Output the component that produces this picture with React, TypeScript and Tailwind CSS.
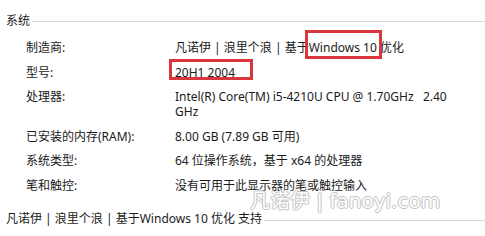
import React from "react";

const font = {
  fontFamily: '"Noto Sans", "Noto Sans CJK SC", sans-serif',
};

function Row({ label, children }: { label: string; children: React.ReactNode }) {
  return (
    <div className="flex">
      <div className="w-[149px] shrink-0">{label}</div>
      <div className="flex-1">{children}</div>
    </div>
  );
}

export default function App() {
  return (
    <div
      className="relative w-[485px] h-[236px] overflow-hidden bg-white text-[12px] leading-[15px] text-[#1a1a1a] font-['Noto_Sans','Noto_Sans_CJK_SC',sans-serif]"
      style={font}
    >
      <div className="flex items-center pl-[6px] pt-[13px]">
        <span>系统</span>
        <div className="ml-[2px] mt-[2px] h-px flex-1 bg-[#d6d6d6]" />
      </div>

      <div className="mt-[12px] flex flex-col gap-[9.5px] pl-[26px]">
        <Row label="制造商:">凡诺伊 | 浪里个浪 | 基于Windows 10 优化</Row>
        <Row label="型号:">20H1 2004</Row>
        <Row label="处理器:">
          <span className="whitespace-pre">Intel(R) Core(TM) i5-4210U CPU @ 1.70GHz   2.40</span>
          <br />
          GHz
        </Row>
        <Row label="已安装的内存(RAM):">8.00 GB (7.89 GB 可用)</Row>
        <Row label="系统类型:">64 位操作系统，基于 x64 的处理器</Row>
        <Row label="笔和触控:">没有可用于此显示器的笔或触控输入</Row>
      </div>

      <div className="mt-[18px] flex items-center pl-[6px]">
        <span>凡诺伊 | 浪里个浪 | 基于Windows 10 优化 支持</span>
        <div className="ml-[2px] mt-[5px] h-px flex-1 bg-[#d6d6d6]" />
      </div>

      <div className="pointer-events-none absolute left-[305px] top-[30px] h-[29px] w-[77px] border-[3px] border-[#d9363e]" />
      <div className="pointer-events-none absolute left-[169px] top-[59px] h-[21px] w-[84px] border-[3px] border-[#d9363e]" />

      <div className="pointer-events-none absolute left-[250px] top-[188px] whitespace-pre text-[20px] leading-[26px] text-white [text-shadow:1px_0_#c2c2c2,-1px_0_#c2c2c2,0_1px_#c2c2c2,0_-1px_#c2c2c2] font-['DejaVu_Sans','Noto_Sans_CJK_SC',sans-serif]">
        凡诺伊 | fanoyi.com
      </div>
    </div>
  );
}
